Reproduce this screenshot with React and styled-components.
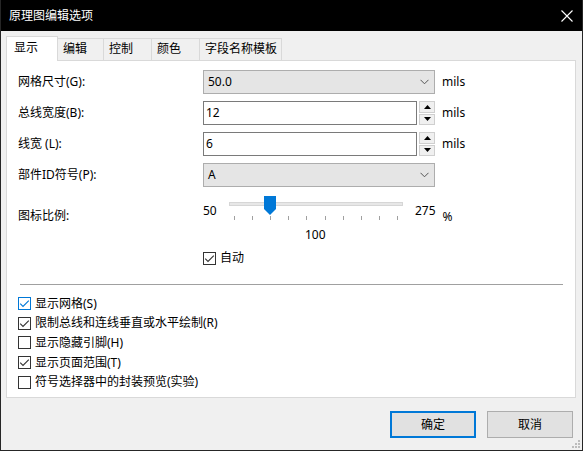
import React from "react";
import styled, { createGlobalStyle } from "styled-components";

const Global = createGlobalStyle`
  html, body { margin: 0; padding: 0; background: #f0f0f0; }
  body { font-family: "Noto Sans", "Noto Sans CJK SC", sans-serif; font-size: 12px; color: #000; }
  * { box-sizing: border-box; }
`;

const Window = styled.div`
  position: relative;
  width: 583px;
  height: 451px;
  border: 1px solid #262626;
  border-top: none;
  background: #f0f0f0;
  display: flex;
  flex-direction: column;
`;

const TitleBar = styled.div`
  height: 31px;
  background: #000;
  color: #fff;
  display: flex;
  align-items: center;
  justify-content: space-between;
  padding: 1px 9px 0 8px;
  font-size: 12px;
  line-height: 16px;
`;

const CloseIcon = () => (
  <svg width="12" height="12" viewBox="0 0 12 12">
    <path d="M0.5 0.5 L11.5 11.5 M11.5 0.5 L0.5 11.5" stroke="#fff" strokeWidth="1.1" />
  </svg>
);

const Body = styled.div`
  flex: 1;
  padding: 5px 6px 0 5px;
  display: flex;
  flex-direction: column;
`;

const TabStrip = styled.div`
  display: flex;
  align-items: flex-end;
  height: 24px;
  position: relative;
  z-index: 1;
`;

const Tab = styled.div`
  width: ${(p) => p.$w}px;
  height: ${(p) => (p.$active ? 25 : 22)}px;
  margin-bottom: ${(p) => (p.$active ? -1 : 0)}px;
  margin-left: ${(p) => (p.$first ? 0 : -1)}px;
  background: ${(p) => (p.$active ? "#fff" : "#f0f0f0")};
  border: 1px solid #d9d9d9;
  border-bottom: none;
  position: relative;
  z-index: ${(p) => (p.$active ? 2 : 1)};
  padding-left: ${(p) => (p.$active ? 7 : 5)}px;
  padding-top: ${(p) => (p.$active ? 3 : 2)}px;
  line-height: 16px;
  white-space: nowrap;
`;

const Panel = styled.div`
  height: 338px;
  background: #fff;
  border: 1px solid #d9d9d9;
  padding: 9px 0 0 11px;
`;

const SettingsGrid = styled.div`
  display: grid;
  grid-template-columns: 178px 232px auto;
  column-gap: 7px;
  row-gap: 7px;
  align-items: center;
`;

const Label = styled.div`
  line-height: 16px;
  white-space: nowrap;
  align-self: ${(p) => (p.$top ? "start" : "center")};
  margin-top: ${(p) => p.$mt || 0}px;
`;

const Unit = styled.div`
  line-height: 16px;
`;

const Combo = styled.div`
  height: 24px;
  background: #e5e5e5;
  border: 1px solid #adadad;
  display: flex;
  align-items: center;
  justify-content: space-between;
  padding: 0 5px 0 4px;
  line-height: 16px;
`;

const Chevron = () => (
  <svg width="9" height="6" viewBox="0 0 9 6">
    <path d="M0.5 0.8 L4.5 4.8 L8.5 0.8" fill="none" stroke="#555" strokeWidth="1" />
  </svg>
);

const SpinField = styled.div`
  display: flex;
  align-items: stretch;
  height: 24px;
`;

const TextBox = styled.div`
  width: 215px;
  background: #fff;
  border: 1px solid #7a7a7a;
  padding: 0 2px;
  display: flex;
  align-items: center;
  line-height: 16px;
`;

const SpinButtons = styled.div`
  margin-left: 2px;
  width: 16px;
  display: flex;
  flex-direction: column;
  gap: 1px;
`;

const SpinButton = styled.div`
  flex: 1;
  background: #f0f0f0;
  border: 1px solid #cfcfcf;
  display: flex;
  align-items: center;
  justify-content: center;
`;

const Arrow = ({ down }) => (
  <svg width="7" height="4" viewBox="0 0 7 4">
    <path d={down ? "M0 0 H7 L3.5 4 Z" : "M0 4 H7 L3.5 0 Z"} fill="#000" />
  </svg>
);

const SliderBlock = styled.div`
  grid-column: 2 / 4;
  display: flex;
  flex-direction: column;
  height: 49px;
`;

const SliderRow = styled.div`
  display: flex;
  align-items: flex-start;
  height: 25px;
`;

const ScaleText = styled.div`
  line-height: 14px;
  width: ${(p) => (p.$w ? `${p.$w}px` : "auto")};
  margin-top: ${(p) => p.$mt}px;
  margin-left: ${(p) => p.$ml || 0}px;
`;

const TrackWrap = styled.div`
  position: relative;
  width: 174px;
  height: 25px;
`;

const Track = styled.div`
  margin-top: 8px;
  height: 4px;
  background: #e7e7e7;
  border: 1px solid #d6d6d6;
`;

const Ticks = styled.div`
  margin-top: 10px;
  padding: 0 5px;
  display: flex;
  justify-content: space-between;
`;

const Tick = styled.div`
  width: 1px;
  height: 4px;
  background: #a0a0a0;
`;

const Thumb = styled.svg`
  position: absolute;
  left: 35px;
  top: 2px;
`;

const CurrentValue = styled.div`
  line-height: 14px;
  margin-top: 9px;
  padding-left: 102px;
`;

const Check = styled.label`
  display: flex;
  align-items: center;
  gap: 4px;
  height: ${(p) => (p.$h ? `${p.$h}px` : "auto")};
  line-height: 16px;
  white-space: nowrap;
`;

const Box = styled.span`
  width: 13px;
  height: 13px;
  flex: none;
  border: 1px solid ${(p) => (p.$focus ? "#0078d7" : "#333")};
  background: #fff;
  display: flex;
  align-items: center;
  justify-content: center;
`;

const CheckBox = ({ checked, focus, children, h }) => (
  <Check $h={h}>
    <Box $focus={focus}>
      {checked && (
        <svg width="11" height="11" viewBox="0 0 11 11">
          <path d="M1.2 5.6 L4 8.4 L9.8 2.6" fill="none" stroke={focus ? "#0078d7" : "#333"} strokeWidth="1.1" />
        </svg>
      )}
    </Box>
    <span>{children}</span>
  </Check>
);

const Separator = styled.div`
  margin: 18px 0 0 2px;
  width: 543px;
  height: 1px;
  background: #a0a0a0;
`;

const OptionList = styled.div`
  margin-top: 9px;
  display: flex;
  flex-direction: column;
`;

const ButtonRow = styled.div`
  margin-top: 13px;
  display: flex;
  justify-content: flex-end;
  gap: 11px;
  padding-right: 3px;
`;

const Button = styled.div`
  width: ${(p) => p.$w}px;
  height: 27px;
  background: #e1e1e1;
  border: ${(p) => (p.$primary ? "2px solid #0078d7" : "1px solid #adadad")};
  display: flex;
  align-items: center;
  justify-content: center;
  line-height: 16px;
`;

const Grip = styled.svg`
  position: absolute;
  right: 2px;
  bottom: 2px;
`;

const tabs = [
  { label: "显示", w: 52 },
  { label: "编辑", w: 47 },
  { label: "控制", w: 49 },
  { label: "颜色", w: 49 },
  { label: "字段名称模板", w: 83 },
];

const options = [
  { label: "显示网格(S)", checked: true, focus: true },
  { label: "限制总线和连线垂直或水平绘制(R)", checked: true },
  { label: "显示隐藏引脚(H)", checked: false },
  { label: "显示页面范围(T)", checked: true },
  { label: "符号选择器中的封装预览(实验)", checked: false },
];

const Spinner = ({ value }) => (
  <SpinField>
    <TextBox>{value}</TextBox>
    <SpinButtons>
      <SpinButton><Arrow /></SpinButton>
      <SpinButton><Arrow down /></SpinButton>
    </SpinButtons>
  </SpinField>
);

export default function App() {
  return (
    <>
      <Global />
      <Window>
        <TitleBar>
          <span>原理图编辑选项</span>
          <CloseIcon />
        </TitleBar>
        <Body>
          <TabStrip>
            {tabs.map((t, i) => (
              <Tab key={t.label} $w={t.w} $first={i === 0} $active={i === 0}>
                {t.label}
              </Tab>
            ))}
          </TabStrip>
          <Panel>
            <SettingsGrid>
              <Label>网格尺寸(G):</Label>
              <Combo>
                <span>50.0</span>
                <Chevron />
              </Combo>
              <Unit>mils</Unit>

              <Label>总线宽度(B):</Label>
              <Spinner value="12" />
              <Unit>mils</Unit>

              <Label>线宽 (L):</Label>
              <Spinner value="6" />
              <Unit>mils</Unit>

              <Label>部件ID符号(P):</Label>
              <Combo>
                <span>A</span>
                <Chevron />
              </Combo>
              <span />

              <Label $top $mt={14}>图标比例:</Label>
              <SliderBlock>
                <SliderRow>
                  <ScaleText $w={26} $mt={10}>50</ScaleText>
                  <TrackWrap>
                    <Track />
                    <Ticks>
                      {Array.from({ length: 10 }).map((_, i) => (
                        <Tick key={i} />
                      ))}
                    </Ticks>
                    <Thumb width="12" height="19" viewBox="0 0 12 19">
                      <path d="M0 0 H12 V13 L6 19 L0 13 Z" fill="#0078d7" />
                    </Thumb>
                  </TrackWrap>
                  <ScaleText $mt={10} $ml={12}>275</ScaleText>
                  <ScaleText $mt={16} $ml={7}>%</ScaleText>
                </SliderRow>
                <CurrentValue>100</CurrentValue>
              </SliderBlock>

              <span />
              <CheckBox checked>自动</CheckBox>
              <span />
            </SettingsGrid>
            <Separator />
            <OptionList>
              {options.map((o) => (
                <CheckBox key={o.label} checked={o.checked} focus={o.focus} h={19.6}>
                  {o.label}
                </CheckBox>
              ))}
            </OptionList>
          </Panel>
          <ButtonRow>
            <Button $w={86} $primary>确定</Button>
            <Button $w={86}>取消</Button>
          </ButtonRow>
        </Body>
        <Grip width="8" height="8" viewBox="0 0 8 8">
          <rect x="6" y="0" width="2" height="2" fill="#bcbcbc" />
          <rect x="3" y="3" width="2" height="2" fill="#bcbcbc" />
          <rect x="6" y="3" width="2" height="2" fill="#bcbcbc" />
          <rect x="0" y="6" width="2" height="2" fill="#bcbcbc" />
          <rect x="3" y="6" width="2" height="2" fill="#bcbcbc" />
          <rect x="6" y="6" width="2" height="2" fill="#bcbcbc" />
        </Grip>
      </Window>
    </>
  );
}
